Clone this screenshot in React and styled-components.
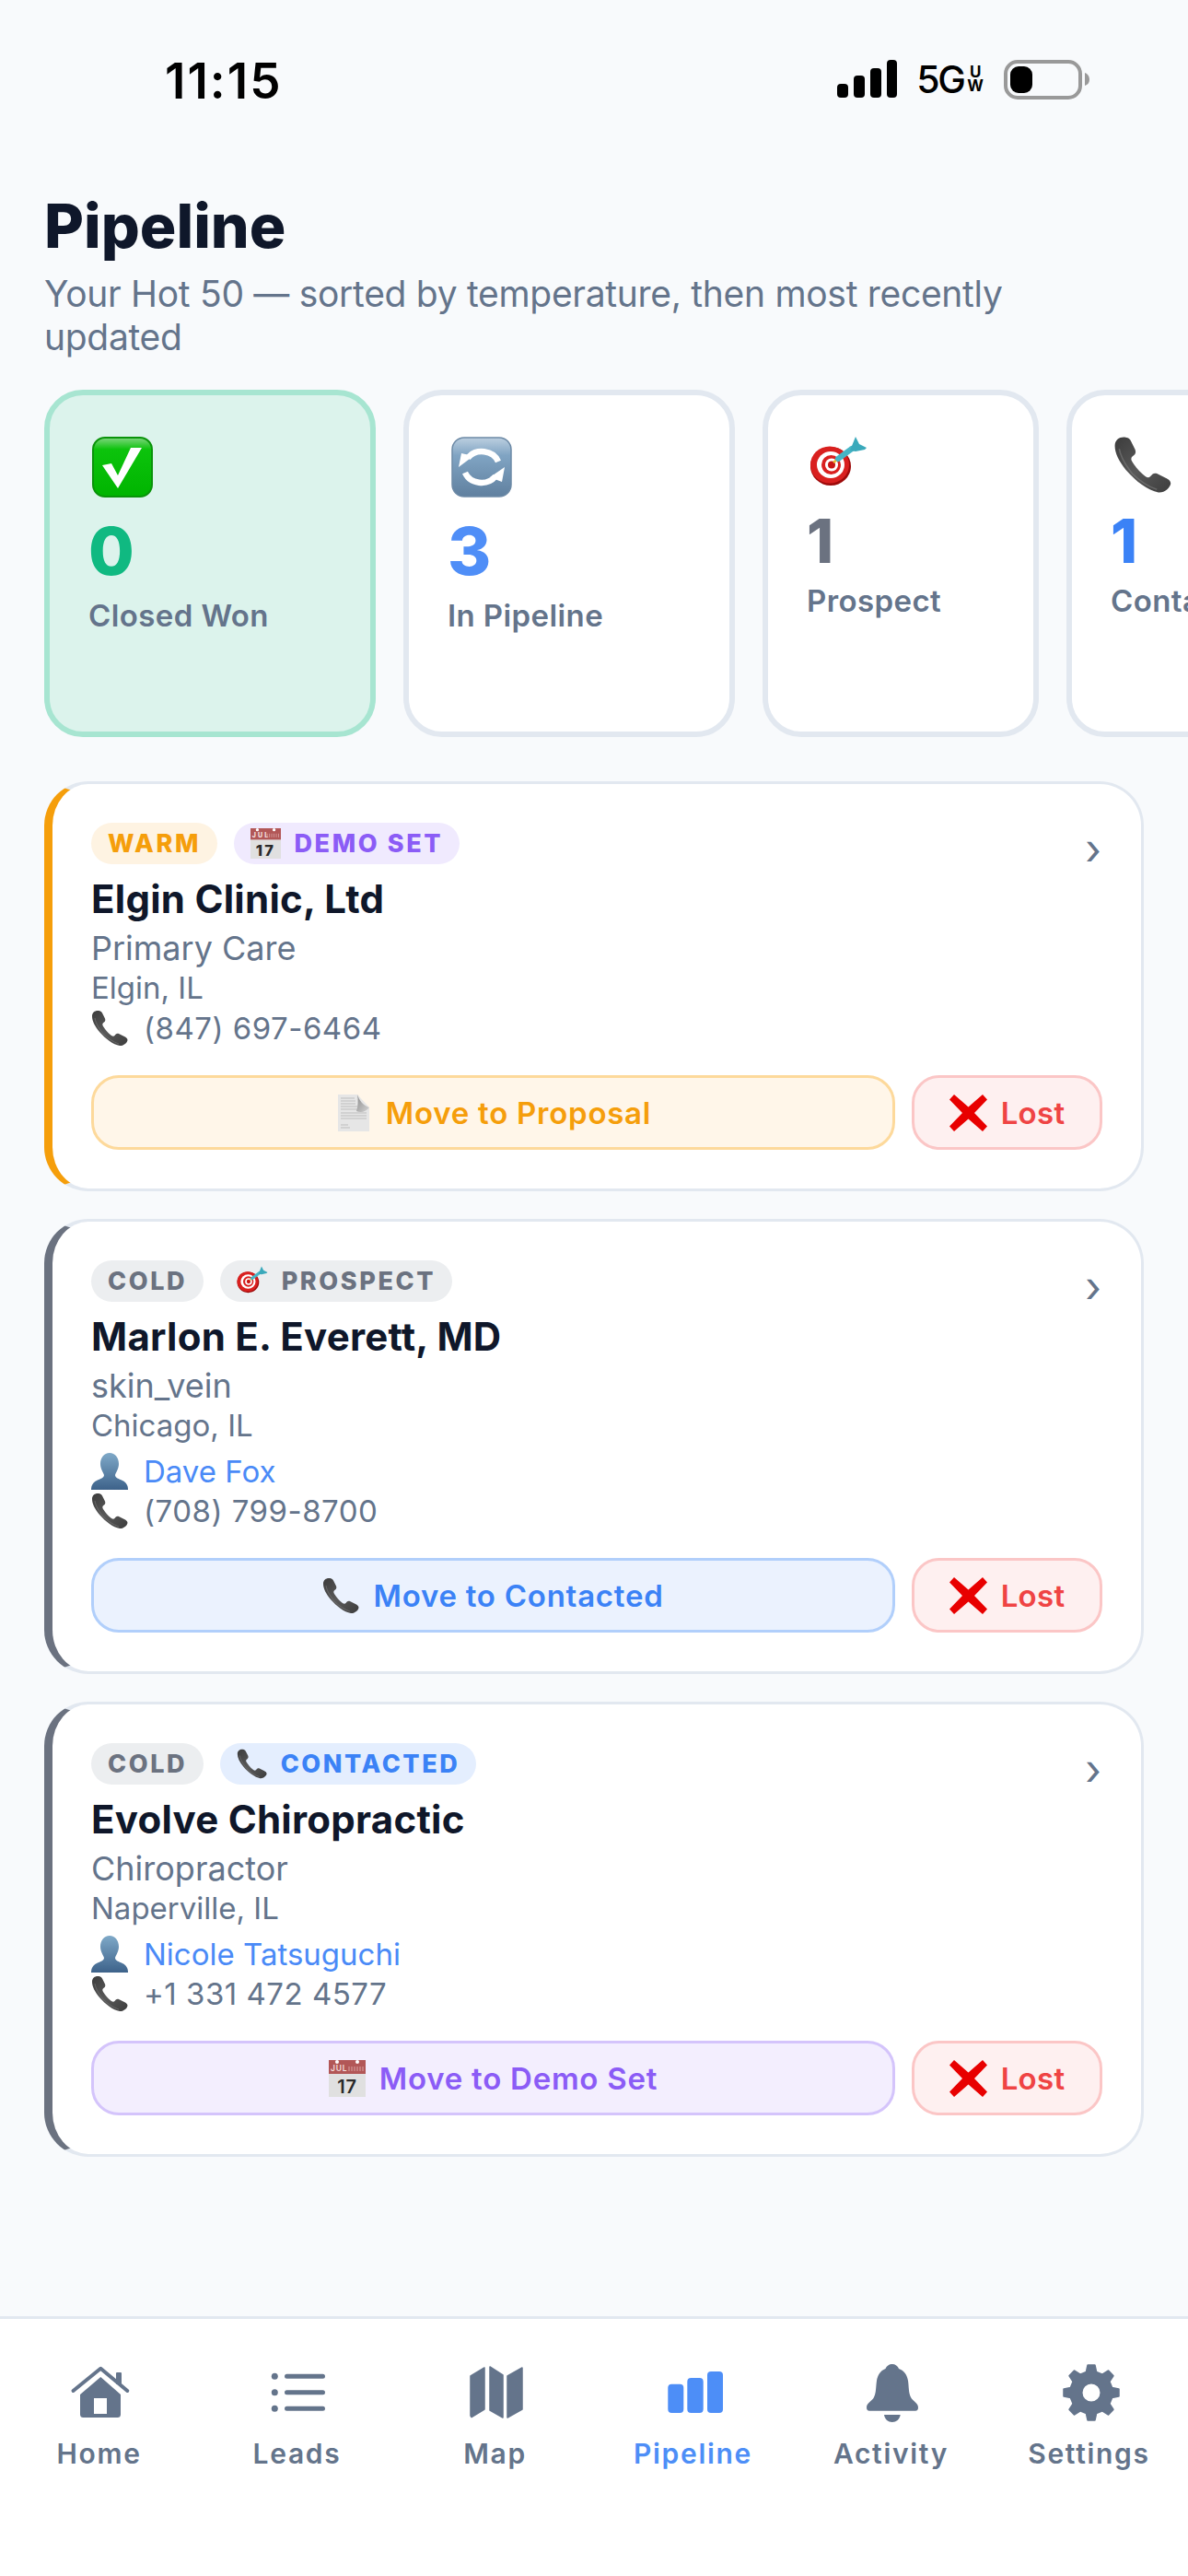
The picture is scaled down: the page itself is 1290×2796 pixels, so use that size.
import React from "react";
import styled, { createGlobalStyle } from "styled-components";

const Global = createGlobalStyle`
  html, body { margin: 0; padding: 0; background: #f8fafc; }
  body { font-family: Inter, "Noto Sans", sans-serif; overflow: hidden; }
  * { box-sizing: border-box; }
`;

const Screen = styled.div`
  width: 1290px; height: 2796px; display: flex; flex-direction: column; overflow: hidden; background: #f8fafc;
`;
const StatusBar = styled.div`
  height: 205px; padding: 61px 107px 0 179px; display: flex; justify-content: space-between; align-items: flex-start; color: #000;
`;
const Time = styled.div`font-size: 53px; line-height: 54px; font-weight: 600; letter-spacing: 2px;`;
const StatusRight = styled.div`display: flex; align-items: flex-start; margin-top: 4px;`;
const FiveG = styled.div`
  margin-left: 21px; display: flex; align-items: center; height: 42px; font-size: 41px; font-weight: 500; letter-spacing: -2.500px;
`;
const UW = styled.div`
  display: flex; flex-direction: column; margin: 0 0 0 4px; font-size: 17px; line-height: 15px; font-weight: 700; letter-spacing: 0; align-items: center;
`;
const Battery = styled.svg`margin-left: 22px; display: block;`;

const Main = styled.main`flex: 1; padding: 0 48px; min-height: 0;`;
const Title = styled.h1`margin: 0; font-size: 66px; font-weight: 800; color: #0f172a; line-height: 80px;`;
const Subtitle = styled.p`margin: 10px 0 34px; font-size: 39px; line-height: 47px; letter-spacing: -0.300px; color: #64748b; max-width: 1100px;`;

const StatRow = styled.div`display: flex; gap: 30px; margin-right: -48px; overflow: hidden; margin-bottom: 48px;`;
const StatCard = styled.div`
  flex: 0 0 ${p => p.$w}px; height: 377px; padding: 42px; border-radius: 42px;
  border: 6px solid ${p => p.$active ? "#a7e5d1" : "#e2e8f0"};
  background: ${p => p.$active ? "#dcf3ec" : "#fff"};
  display: flex; flex-direction: column; align-items: flex-start;
`;
const StatEmoji = styled.div`
  height: ${p => p.$big ? 72 : 66}px; padding: ${p => p.$big ? "3px 0 0 4px" : "2px 0 0 3px"};
`;
const StatNumber = styled.div`
  margin-top: ${p => p.$big ? 19 : 17}px;
  font-size: ${p => p.$big ? 72 : 66}px; line-height: ${p => p.$big ? 72 : 66}px; font-weight: 800; color: ${p => p.$color};
`;
const StatLabel = styled.div`
  margin-top: ${p => p.$big ? 14 : 12}px; font-size: 33px; line-height: 40px; font-weight: 600; letter-spacing: 0.400px; color: #64748b; white-space: nowrap;
`;

const List = styled.div`display: flex; flex-direction: column; gap: 30px;`;
const Card = styled.article`
  background: #fff; border: 3px solid #e2e8f0; border-left: 9px solid ${p => p.$accent}; border-radius: 48px; padding: 42px;
`;
const TagRow = styled.div`display: flex; align-items: center; gap: 18px; height: 45px;`;
const Tag = styled.span`
  display: inline-flex; align-items: center; gap: 14.500px; height: 45px; padding: 0 18px; border-radius: 24px;
  font-size: 27px; font-weight: 800; letter-spacing: 2.600px; background: ${p => p.$bg}; color: ${p => p.$fg};
`;
const Chevron = styled.span`margin-left: auto; margin-right: 1px; margin-top: 12px; font-size: 46px; line-height: 45px; color: #64748b;`;
const Name = styled.h2`margin: 12px 0 6px; font-size: 42px; line-height: 51px; font-weight: 700; letter-spacing: 0.250px; color: #0f172a;`;
const Specialty = styled.div`font-size: 36px; line-height: 44px; color: #64748b;`;
const City = styled.div`font-size: 33px; line-height: 43px; color: #64748b;`;
const ContactRow = styled.div`
  display: flex; align-items: center; gap: 17px; height: 43px; font-size: 33px;
  color: ${p => p.$link ? "#4a8af7" : "#64748b"};
  letter-spacing: ${p => p.$link ? 0 : 0.500}px;
  margin-top: ${p => p.$link ? 6 : 0}px;
`;
const Actions = styled.div`display: flex; gap: 18px; margin-top: 30px;`;
const ActionButton = styled.button`
  flex: ${p => p.$fixed ? "0 0 207px" : "1"}; height: 81px; border-radius: 30px; border: 3px solid ${p => p.$border};
  background: ${p => p.$bg}; color: ${p => p.$fg}; font-family: inherit; font-size: 33px; font-weight: 600;
  letter-spacing: ${p => p.$fixed ? 0.300 : 0.750}px;
  display: flex; align-items: center; justify-content: center; gap: 15px; padding: 0;
`;

const Nav = styled.nav`
  height: 282px; flex: none; background: #fff; border-top: 3px solid #e2e8f0; padding-top: 44px;
  display: grid; grid-template-columns: repeat(6, 1fr);
`;
const NavItem = styled.div`
  display: flex; flex-direction: column; align-items: center; gap: 12px; color: ${p => p.$active ? "#4d8ef7" : "#64748b"};
`;
const NavLabel = styled.span`font-size: 30px; line-height: 36px; font-weight: 600; letter-spacing: 1.700px;`;

const PhoneE = ({ s = 40 }) => (
  <svg width={s} height={s} viewBox="0 0 40 40">
    <defs><linearGradient id="ph" x1="0" y1="0" x2="1" y2="1"><stop offset="0" stopColor="#3c3c3c" /><stop offset=".5" stopColor="#595959" /><stop offset="1" stopColor="#3d3d3d" /></linearGradient></defs>
    <path fill="url(#ph)" d="M7 1C4 1 1 3 1 7c0 5 3 11 8 17 6 7 15 14 22 15 4 .5 8-3 8.500-6 0-2-1.500-3-3.500-4l-6-3c-2-.5-3 0-4.500 2-1 1-2 1-3.500 0-4-3-8-8-9.500-11-.5-1.500 0-2.500 1.500-3.500 1.500-1 1.500-2.500 1-4l-3-6C11 1.500 9 1 7 1Z" />
    <path fill="none" stroke="#7c7c7c" strokeWidth="1" d="M4 9c1 6 5 12 9 17 5 5 11 9 17 11" opacity=".6" />
  </svg>
);
const CheckE = () => (
  <svg width="66" height="66" viewBox="0 0 66 66">
    <defs><linearGradient id="ck" x1="0" y1="0" x2="0" y2="1"><stop offset="0" stopColor="#7fd67f" /><stop offset=".2" stopColor="#0cc30c" /><stop offset="1" stopColor="#00b400" /></linearGradient></defs>
    <rect x="1" y="1" width="64" height="64" rx="13" fill="url(#ck)" stroke="#0a930a" strokeWidth="2" />
    <polygon fill="#fff" points="11,31 21,29 28,42 42,12 54,12 28,56" />
  </svg>
);
const RefreshE = () => (
  <svg width="66" height="66" viewBox="0 0 66 66">
    <defs><linearGradient id="rf" x1="0" y1="0" x2="0" y2="1"><stop offset="0" stopColor="#bccfe0" /><stop offset=".3" stopColor="#80a4c3" /><stop offset="1" stopColor="#60809f" /></linearGradient></defs>
    <rect x="1" y="1" width="64" height="64" rx="13" fill="url(#rf)" stroke="#6d8aa6" strokeWidth="1.500" />
    <g fill="none" stroke="#fff" strokeWidth="6.500">
      <path d="M51 27A19 17 0 0 0 18 23" />
      <path d="M15 39A19 17 0 0 0 48 43" />
    </g>
    <polygon fill="#fff" points="8,33 24,21 11,18" />
    <polygon fill="#fff" points="58,33 42,44 55,49" />
  </svg>
);
const TargetE = ({ s = 63 }) => (
  <svg width={s} height={s} viewBox="0 0 63 63">
    <ellipse cx="23" cy="33" rx="22" ry="21" fill="#9d0a0a" />
    <ellipse cx="22" cy="31.500" rx="21" ry="20" fill="#d9201f" />
    <ellipse cx="23" cy="31.500" rx="15" ry="14.500" fill="#fff" />
    <ellipse cx="23.500" cy="31.500" rx="10.500" ry="10.500" fill="#d9201f" />
    <ellipse cx="24" cy="31.500" rx="7" ry="7" fill="#fff" />
    <ellipse cx="24" cy="31.500" rx="4" ry="4" fill="#c81414" />
    <path d="M26 29L32 24" stroke="#e9b52c" strokeWidth="2.500" />
    <path d="M31 25L46 14" stroke="#46b5c6" strokeWidth="6" strokeLinecap="round" />
    <path d="M44 16L50 1L54 9L62 13L60 15L50 17Z" fill="#3aa9bb" />
  </svg>
);
const CalendarE = ({ s = 40 }) => (
  <svg width={s} height={s} viewBox="0 0 40 40">
    <rect x="0" y="0" width="40" height="40" fill="#e0e0e0" />
    <rect x="0" y="0" width="40" height="15" fill="#b25757" />
    <circle cx="9" cy="2" r="2" fill="#fff" />
    <circle cx="31" cy="2" r="2" fill="#fff" />
    <text x="2" y="12" fontSize="8.500" fill="#f4dede" fontFamily="Inter">JUL</text>
    <path d="M22 12V7M25 12V7M28 12V7M31 12V7M34 12V7M37 12V7" stroke="#d9a3a3" strokeWidth="1" />
    <text x="20" y="36" fontSize="20" textAnchor="middle" fill="#2a2a2a" fontFamily="Inter">17</text>
  </svg>
);
const DocE = () => (
  <svg width="40" height="40" viewBox="0 0 40 40">
    <defs><linearGradient id="dc" x1="0" y1="0" x2="1" y2="1"><stop offset="0" stopColor="#8a8a8a" /><stop offset="1" stopColor="#d4d4d4" /></linearGradient></defs>
    <polygon fill="#e6e6e6" points="3,0 24,0 37,14 37,40 3,40" />
    <path d="M6 4h15M6 7h16M6 10h16M6 13h18M6 16h18M6 20h28M6 23h28M6 26h28M6 33h8M6 36h10" stroke="#bdbdbd" strokeWidth="1" />
    <path d="M24 0C26 6 30 12 37 14C33 19 28 20 23 18C25 12 25 6 24 0Z" fill="url(#dc)" />
  </svg>
);
const XE = () => (
  <svg width="41" height="40" viewBox="0 0 41 40">
    <polygon fill="#e80000" points="5,0 20.500,13.500 36,0 41,5.500 27,20 41,34.500 36,40 20.500,26.500 5,40 0,34.500 14,20 0,5.500" />
  </svg>
);
const PersonE = () => (
  <svg width="40" height="40" viewBox="0 0 40 40">
    <defs><linearGradient id="pr" x1="0" y1="0" x2="0" y2="1"><stop offset="0" stopColor="#7fa9c8" /><stop offset="1" stopColor="#3d628a" /></linearGradient></defs>
    <path fill="url(#pr)" d="M20 0c6 0 10 5 10 12 0 5-3 9-4 12 0 3 4 4 8 6 4 2 6 5 6 10H0c0-5 2-8 6-10 4-2 8-3 8-6-1-3-4-7-4-12C10 5 14 0 20 0Z" />
  </svg>
);

const HomeI = () => (
  <svg width="72" height="72" viewBox="0 0 72 72" fill="currentColor">
    <path d="M7.500 34L37.300 9.700 66.300 34" fill="none" stroke="currentColor" strokeWidth="4" strokeLinecap="round" strokeLinejoin="round" />
    <rect x="54" y="14" width="6" height="13" rx="1" />
    <path fillRule="evenodd" d="M37.300 19L59 38V59.500Q59 63 55.500 63H18.500Q15 63 15 59.500V38ZM30 42V59H44V42Z" />
  </svg>
);
const LeadsI = () => (
  <svg width="72" height="72" viewBox="0 0 72 72" fill="currentColor">
    <circle cx="11.300" cy="18.300" r="3.500" /><circle cx="11.300" cy="35.700" r="3.500" /><circle cx="11.300" cy="53.300" r="3.500" />
    <path d="M24.500 18.300H63.500M24.500 35.700H63.500M24.500 53.300H63.500" stroke="currentColor" strokeWidth="5" strokeLinecap="round" />
  </svg>
);
const MapI = () => (
  <svg width="72" height="72" viewBox="0 0 72 72" fill="currentColor" stroke="currentColor" strokeWidth="1.500" strokeLinejoin="round">
    <path d="M9 18L24 9V54L10 62.500L9 61Z" />
    <path d="M30 8L44 17V63L30 55Z" />
    <path d="M49 18L65 9V54L49 63Z" />
  </svg>
);
const PipelineI = () => (
  <svg width="72" height="72" viewBox="0 0 72 72" fill="currentColor">
    <rect x="8.300" y="26.700" width="17" height="31.300" rx="4" />
    <rect x="29.300" y="20" width="17.400" height="38" rx="4" />
    <rect x="51" y="13" width="17" height="45" rx="4" />
  </svg>
);
const BellI = () => (
  <svg width="72" height="72" viewBox="0 0 72 72" fill="currentColor">
    <path d="M36.700 5C40 5 43 7 44 10C50 12 53 17 54 23C55 30 54.500 36 57 41C59 45 65 47 65 52C65 54.500 64 55.700 62 55.700H12C10 55.700 9 54.500 9 52C9 47 15 45 17 41C19.500 36 19 30 20 23C21 17 24 12 29.500 10C30.500 7 33.500 5 36.700 5Z" />
    <path d="M28 60H45.700C45 65 41 68 36.800 68C32.500 68 28.700 65 28 60Z" />
  </svg>
);
const gearPath = () => {
  const cx = 38, cy = 36, teeth = 8, ro = 30, ri = 23;
  const pts = [];
  for (let i = 0; i < teeth; i++) {
    const a = (i / teeth) * Math.PI * 2 - Math.PI / 2;
    const step = Math.PI * 2 / teeth;
    [[-0.3, ri], [-0.16, ro], [0.16, ro], [0.3, ri]].forEach(([f, r]) => {
      const t = a + f * step;
      pts.push(`${(cx + r * Math.cos(t)).toFixed(2)} ${(cy + r * Math.sin(t)).toFixed(2)}`);
    });
  }
  return `M${pts.join("L")}Z M${cx - 10.5} ${cy}a10.500 10.500 0 1 0 21 0a10.500 10.500 0 1 0 -21 0Z`;
};
const GearI = () => (
  <svg width="72" height="72" viewBox="0 0 72 72" fill="currentColor" stroke="currentColor" strokeWidth="2" strokeLinejoin="round">
    <path fillRule="evenodd" d={gearPath()} />
  </svg>
);

const TAGS = {
  warm: { label: "WARM", bg: "#fef3e2", fg: "#f59e0b" },
  cold: { label: "COLD", bg: "#eceef0", fg: "#6b7280" },
  demo: { label: "DEMO SET", bg: "#f0eafe", fg: "#8b5cf6", icon: <CalendarE s={33} /> },
  prospect: { label: "PROSPECT", bg: "#eceef0", fg: "#6b7280", icon: <TargetE s={34} /> },
  contacted: { label: "CONTACTED", bg: "#e4eefe", fg: "#3b82f6", icon: <PhoneE s={33} /> },
};
const BUTTONS = {
  proposal: { label: "Move to Proposal", bg: "#fff6e9", border: "#fdd99b", fg: "#f59e0b", icon: <DocE /> },
  contacted: { label: "Move to Contacted", bg: "#ebf2fe", border: "#b1cffb", fg: "#3b82f6", icon: <PhoneE /> },
  demo: { label: "Move to Demo Set", bg: "#f3eefe", border: "#d4c4fb", fg: "#8b5cf6", icon: <CalendarE /> },
};
const STATS = [
  { w: 360, big: true, active: true, icon: <CheckE />, n: 0, color: "#10b981", label: "Closed Won" },
  { w: 360, big: true, icon: <RefreshE />, n: 3, color: "#4f8ef7", label: "In Pipeline" },
  { w: 300, icon: <TargetE />, n: 1, color: "#6b7280", label: "Prospect" },
  { w: 300, icon: <PhoneE s={63} />, n: 1, color: "#3b82f6", label: "Contacted" },
];
const LEADS = [
  { accent: "#f59e0b", temp: "warm", stage: "demo", name: "Elgin Clinic, Ltd", spec: "Primary Care", city: "Elgin, IL", phone: "(847) 697-6464", next: "proposal" },
  { accent: "#6b7280", temp: "cold", stage: "prospect", name: "Marlon E. Everett, MD", spec: "skin_vein", city: "Chicago, IL", contact: "Dave Fox", phone: "(708) 799-8700", next: "contacted" },
  { accent: "#6b7280", temp: "cold", stage: "contacted", name: "Evolve Chiropractic", spec: "Chiropractor", city: "Naperville, IL", contact: "Nicole Tatsuguchi", phone: "+1 331 472 4577", next: "demo" },
];
const NAV = [
  { label: "Home", Icon: HomeI }, { label: "Leads", Icon: LeadsI }, { label: "Map", Icon: MapI },
  { label: "Pipeline", Icon: PipelineI, active: true }, { label: "Activity", Icon: BellI }, { label: "Settings", Icon: GearI },
];

const TagPill = ({ kind }) => {
  const t = TAGS[kind];
  return <Tag $bg={t.bg} $fg={t.fg}>{t.icon}{t.label}</Tag>;
};

export default function App() {
  return (
    <Screen>
      <Global />
      <StatusBar>
        <Time>11:15</Time>
        <StatusRight>
          <svg width="65" height="42" viewBox="0 0 65 42" fill="#000">
            <rect x="0" y="26" width="12" height="15" rx="4" />
            <rect x="18" y="17" width="12" height="24" rx="4" />
            <rect x="36" y="9" width="12" height="32" rx="4" />
            <rect x="54" y="0" width="11" height="41" rx="4" />
          </svg>
          <FiveG>5G<UW><span>U</span><span>W</span></UW></FiveG>
          <Battery width="93" height="43" viewBox="0 0 93 43">
            <rect x="2" y="2" width="81" height="39" rx="13" fill="none" stroke="#999" strokeWidth="4" />
            <rect x="7" y="7" width="24" height="29" rx="9" fill="#000" />
            <path d="M88 14C91 15 93 18 93 21.500C93 25 91 27 88 28Z" fill="#999" />
          </Battery>
        </StatusRight>
      </StatusBar>
      <Main>
        <Title>Pipeline</Title>
        <Subtitle>Your Hot 50 — sorted by temperature, then most recently updated</Subtitle>
        <StatRow>
          {STATS.map(s => (
            <StatCard key={s.label} $w={s.w} $active={s.active}>
              <StatEmoji $big={s.big}>{s.icon}</StatEmoji>
              <StatNumber $big={s.big} $color={s.color}>{s.n}</StatNumber>
              <StatLabel $big={s.big}>{s.label}</StatLabel>
            </StatCard>
          ))}
        </StatRow>
        <List>
          {LEADS.map(l => {
            const b = BUTTONS[l.next];
            return (
              <Card key={l.name} $accent={l.accent}>
                <TagRow>
                  <TagPill kind={l.temp} />
                  <TagPill kind={l.stage} />
                  <Chevron>›</Chevron>
                </TagRow>
                <Name>{l.name}</Name>
                <Specialty>{l.spec}</Specialty>
                <City>{l.city}</City>
                {l.contact && <ContactRow $link><PersonE />{l.contact}</ContactRow>}
                <ContactRow><PhoneE />{l.phone}</ContactRow>
                <Actions>
                  <ActionButton $bg={b.bg} $border={b.border} $fg={b.fg}>{b.icon}{b.label}</ActionButton>
                  <ActionButton $fixed $bg="#fef0f0" $border="#fbc6c6" $fg="#ef4444"><XE />Lost</ActionButton>
                </Actions>
              </Card>
            );
          })}
        </List>
      </Main>
      <Nav>
        {NAV.map(({ label, Icon, active }) => (
          <NavItem key={label} $active={active}><Icon /><NavLabel>{label}</NavLabel></NavItem>
        ))}
      </Nav>
    </Screen>
  );
}
